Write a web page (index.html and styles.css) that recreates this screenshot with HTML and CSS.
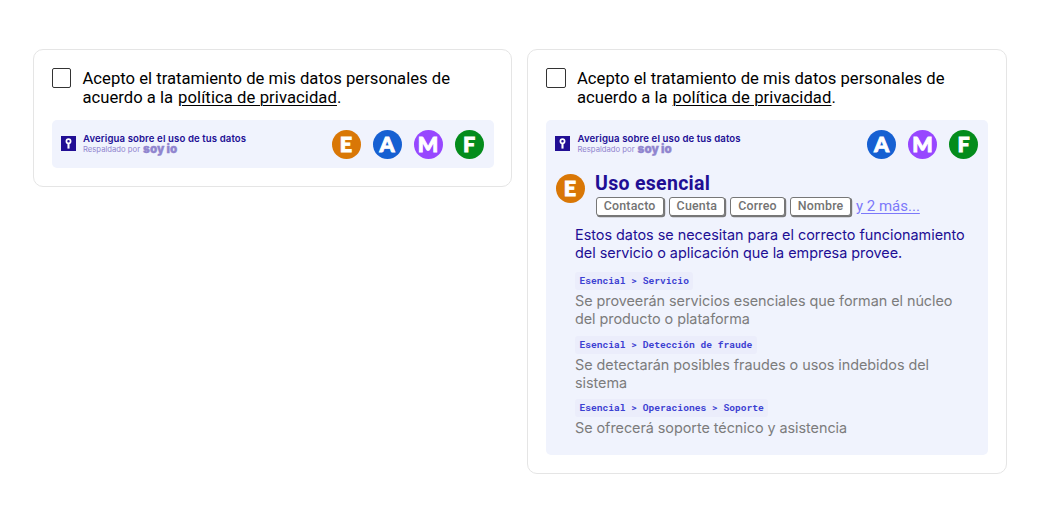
FILE: index.html
```html
<!DOCTYPE html>
<html lang="es">
<head>
<meta charset="utf-8">
<title>Consentimiento de datos</title>
<link rel="stylesheet" href="styles.css">
</head>
<body>
<main class="page">
  <section class="card">
    <label class="consent">
      <span class="checkbox"></span>
      <span class="consent-text">Acepto el tratamiento de mis datos personales de<br>acuerdo a la <a class="policy">política de privacidad</a>.</span>
    </label>
    <div class="panel">
      <header class="bar">
        <svg class="lock" viewBox="0 0 15 15"><rect width="15" height="15" fill="#210e94"/><circle cx="7.5" cy="5.3" r="2.1" fill="none" stroke="#fff" stroke-width="1.7"/><path d="M7.5 7v5.6" stroke="#fff" stroke-width="2.1"/></svg>
        <div class="brand">
          <div class="brand-title">Averigua sobre el uso de tus datos</div>
          <div class="brand-sub"><span class="backed">Respaldado por</span><span class="soyio">soy io</span></div>
        </div>
        <div class="badges">
          <span class="badge orange">E</span><span class="badge blue">A</span><span class="badge purple">M</span><span class="badge green">F</span>
        </div>
      </header>
    </div>
  </section>

  <section class="card">
    <label class="consent">
      <span class="checkbox"></span>
      <span class="consent-text">Acepto el tratamiento de mis datos personales de<br>acuerdo a la <a class="policy">política de privacidad</a>.</span>
    </label>
    <div class="panel">
      <header class="bar">
        <svg class="lock" viewBox="0 0 15 15"><rect width="15" height="15" fill="#210e94"/><circle cx="7.5" cy="5.3" r="2.1" fill="none" stroke="#fff" stroke-width="1.7"/><path d="M7.5 7v5.6" stroke="#fff" stroke-width="2.1"/></svg>
        <div class="brand">
          <div class="brand-title">Averigua sobre el uso de tus datos</div>
          <div class="brand-sub"><span class="backed">Respaldado por</span><span class="soyio">soy io</span></div>
        </div>
        <div class="badges">
          <span class="badge blue">A</span><span class="badge purple">M</span><span class="badge green">F</span>
        </div>
      </header>
      <div class="use">
        <span class="badge orange">E</span>
        <div class="use-info">
          <h2 class="use-title">Uso esencial</h2>
          <div class="tags">
            <span class="tag">Contacto</span><span class="tag">Cuenta</span><span class="tag">Correo</span><span class="tag">Nombre</span><a class="more">y 2 más...</a>
          </div>
        </div>
      </div>
      <div class="details">
        <p class="summary">Estos datos se necesitan para el correcto funcionamiento<br>del servicio o aplicación que la empresa provee.</p>
        <div class="item">
          <code class="path">Esencial &gt; Servicio</code>
          <p class="desc">Se proveerán servicios esenciales que forman el núcleo<br>del producto o plataforma</p>
        </div>
        <div class="item">
          <code class="path">Esencial &gt; Detección de fraude</code>
          <p class="desc">Se detectarán posibles fraudes o usos indebidos del<br>sistema</p>
        </div>
        <div class="item">
          <code class="path">Esencial &gt; Operaciones &gt; Soporte</code>
          <p class="desc">Se ofrecerá soporte técnico y asistencia</p>
        </div>
      </div>
    </div>
  </section>
</main>
</body>
</html>
```
FILE: styles.css
```css
* { box-sizing: border-box; }
body { margin: 0; background: #fff; font-family: Roboto, "Liberation Sans", sans-serif; }
.page { display: flex; align-items: flex-start; gap: 15px; padding: 49px 0 0 32.5px; white-space: nowrap; }
.card { width: 479.5px; padding: 18px; border: 1px solid #e5e5e5; border-radius: 10px; }
.consent { display: flex; gap: 11.5px; height: 52px; }
.checkbox { flex: none; width: 19.5px; height: 20px; border: 1.5px solid #333; border-radius: 2px; }
.consent-text { padding-top: .5px; font-size: 16.65px; line-height: 19.5px; letter-spacing: .01px; color: #000; }
.policy { margin-left: .8px; letter-spacing: .07px; text-decoration: underline; text-decoration-thickness: 1.3px; text-underline-offset: 2px; }
.panel { width: 442px; background: #f0f3fd; border-radius: 5px; }
.bar { display: flex; align-items: center; height: 48px; padding: 0 10px 0 9px; }
.lock { width: 15px; height: 15px; margin: 0 7.5px 2px 0; }
.brand-title { margin-top: -1px; font: 600 9.6px/11px Inter, sans-serif; letter-spacing: .11px; color: #210e94; }
.brand-sub { display: flex; align-items: center; height: 11px; gap: 3px; color: #9085cf; }
.backed { font: 400 7.7px/11px Inter, sans-serif; }
.soyio { font: 900 11.6px/11px Inter, sans-serif; -webkit-text-stroke: .3px #9085cf; }
.badges { display: flex; gap: 12px; margin-left: auto; }
.badge { flex: none; display: flex; align-items: center; justify-content: center; width: 29px; height: 29px; border-radius: 50%; color: #fff; font: 900 21.5px/29px Lato, sans-serif; -webkit-text-stroke: .9px #fff; }
.orange { background: #d97706; }
.blue { background: #1660d2; }
.purple { background: #9747ff; }
.green { background: #048c1c; }
.use { display: flex; gap: 10.5px; padding: 6px 0 0 9.5px; }
.use-title { margin: -1px 0 0; font: 700 19.5px/21px Roboto, sans-serif; letter-spacing: .3px; color: #210e94; }
.tags { display: flex; align-items: center; gap: 5px; margin: 3px 0 0 .7px; }
.tag { height: 19px; padding: 0 7px; border: 1px solid #777; border-radius: 3px; box-shadow: 1px 1px 0 .2px #777; background: #fff; color: #737373; font: 500 12.4px/16px Roboto, sans-serif; letter-spacing: .2px; }
.more { margin: -2px 0 0 -.5px; font-size: 15px; line-height: 18px; color: #7c78fa; text-decoration: underline; text-underline-offset: 2px; }
.details { padding: 10px 0 17.5px 29px; font-family: Inter, sans-serif; font-size: 14.4px; line-height: 18px; }
.summary { margin: 0 0 10px; color: #210e94; letter-spacing: -.01px; }
.item + .item { margin-top: 7.7px; }
.path { display: block; width: fit-content; height: 18px; padding: 0 4.5px; margin-bottom: 2px; border-radius: 3px; background: #ebedfb; color: #3c40d2; font: 700 9.6px/18px "Roboto Mono", "DejaVu Sans Mono", monospace; }
.desc { margin: 0; color: #7c7c7c; letter-spacing: -.045px; }
```
